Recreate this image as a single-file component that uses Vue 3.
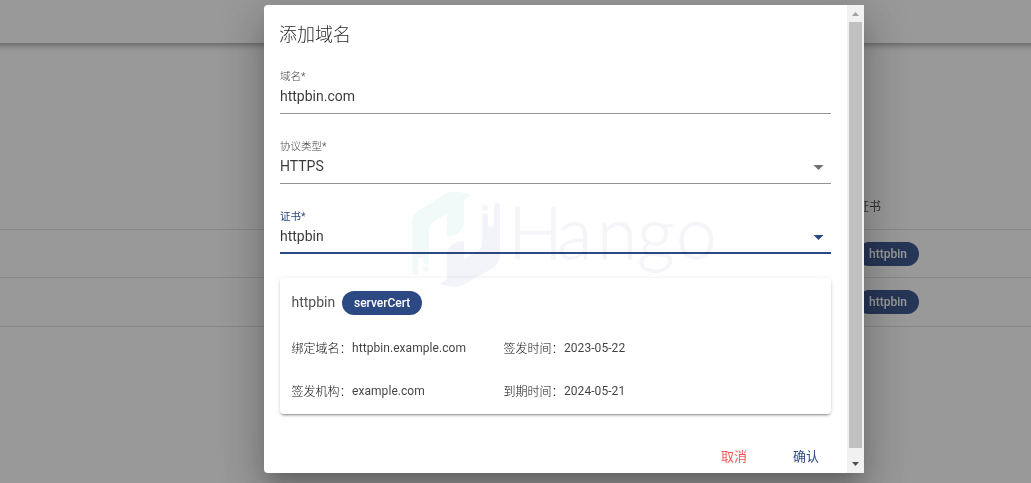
<script setup>
const backgroundRows = ['httpbin', 'httpbin']
const fields = [
  { label: '域名*', value: 'httpbin.com', select: false, active: false },
  { label: '协议类型*', value: 'HTTPS', select: true, active: false },
  { label: '证书*', value: 'httpbin', select: true, active: true },
]
const details = [
  { label: '绑定域名：', value: 'httpbin.example.com' },
  { label: '签发时间：', value: '2023-05-22' },
  { label: '签发机构：', value: 'example.com' },
  { label: '到期时间：', value: '2024-05-21' },
]
</script>

<template>
  <div class="app">
    <div class="page">
      <header class="toolbar"></header>
      <div class="table">
        <div class="row head"><span>证书</span></div>
        <div v-for="(name, i) in backgroundRows" :key="i" class="row">
          <span class="chip">{{ name }}</span>
        </div>
      </div>
    </div>
    <div class="scrim"></div>

    <div class="dialog">
      <div class="content">
        <h1 class="title">添加域名</h1>
        <div v-for="f in fields" :key="f.label" class="field" :class="{ active: f.active }">
          <div class="label">{{ f.label }}</div>
          <div class="value">
            <span>{{ f.value }}</span>
            <svg v-if="f.select" class="caret" width="24" height="24" viewBox="0 0 24 24">
              <path d="M6.500 10l5 5 5-5z" />
            </svg>
          </div>
        </div>
        <section class="card">
          <div class="card-head">
            <span class="card-name">httpbin</span>
            <span class="chip">serverCert</span>
          </div>
          <div class="details">
            <div v-for="d in details" :key="d.label" class="detail">
              <span class="key">{{ d.label }}</span><span>{{ d.value }}</span>
            </div>
          </div>
        </section>
        <footer class="actions">
          <button class="cancel">取消</button>
          <button class="confirm">确认</button>
        </footer>
      </div>
      <div class="scrollbar">
        <svg width="17" height="17" viewBox="0 0 17 17"><path d="M5 11h7L8.500 7z" fill="#a3a3a3" /></svg>
        <div class="thumb"></div>
        <svg width="17" height="17" viewBox="0 0 17 17"><path d="M5 6h7L8.500 10z" fill="#505050" /></svg>
      </div>

      <svg class="watermark" width="320" height="120" viewBox="400 180 320 120">
        <g fill="#f2faf9">
          <path d="M412 222Q412 214 419 210L447 193Q455 189 471 195L464 200V220Q464 236 447 236V214L433 222Q429 225 429 231V261Q429 265 426 265Q423 265 423 261V258H418V271Q418 275 415 275Q412 275 412 271Z" />
          <circle cx="426" cy="269" r="3" />
        </g>
        <g fill="#f3f4f9">
          <path d="M482 217Q482 213 485 213Q488 213 488 217V224Q488 227 491 227Q494 227 494 224V206Q494 203 497 203Q500 203 500 206V255Q500 263 493 268L463 285Q455 289 440 284L447 279V256Q447 242 464 241V259L478 251Q482 249 482 243Z" />
          <circle cx="485" cy="208" r="3" />
        </g>
        <text x="508 557 597 637 676" y="259">Hango</text>
      </svg>
    </div>
  </div>
</template>

<style>
html, body { margin: 0; overflow: hidden; }
</style>

<style scoped>
.app {
  position: relative;
  height: 483px;
  overflow: hidden;
  color: rgba(0, 0, 0, 0.87);
  font-family: Roboto, "Noto Sans CJK SC", sans-serif;
}
.page { height: 483px; background: #fff; }
.toolbar {
  height: 43px;
  margin: 0 -20px;
  box-shadow: 0 2px 4px -1px rgba(0, 0, 0, 0.2), 0 4px 5px rgba(0, 0, 0, 0.14), 0 1px 10px rgba(0, 0, 0, 0.12);
}
.table { padding-top: 138px; }
.row {
  display: flex;
  align-items: center;
  box-sizing: border-box;
  height: 49px;
  padding-left: 857px;
  border-bottom: 1px solid rgba(0, 0, 0, 0.12);
}
.row:nth-child(2) { height: 48px; }
.row.head { font-size: 12px; color: rgba(0, 0, 0, 0.75); }
.chip {
  display: inline-flex;
  align-items: center;
  height: 24px;
  padding: 0 12px;
  border-radius: 12px;
  background: #2c4983;
  color: #fff;
  font-size: 12px;
  font-weight: 500;
}
.scrim { position: absolute; inset: 0; background: rgba(33, 33, 33, 0.46); }
.dialog {
  position: absolute;
  left: 264px;
  top: 5px;
  display: flex;
  width: 600px;
  height: 468px;
  border-radius: 4px 0 0 4px;
  background: #fff;
  box-shadow: 0 11px 15px -7px rgba(0, 0, 0, 0.2), 0 24px 38px 3px rgba(0, 0, 0, 0.14), 0 9px 46px 8px rgba(0, 0, 0, 0.12);
}
.content { flex: 1; padding: 0 16px; }
.title { margin: 0 0 0 -1px; padding-top: 14px; height: 46px; line-height: 32px; font-size: 18px; font-weight: 300; }
.field { box-sizing: border-box; height: 49px; margin-bottom: 21px; border-bottom: 1px solid #949494; }
.label { padding-top: 4px; height: 15px; line-height: 16px; font-size: 10.5px; font-weight: 300; color: rgba(0, 0, 0, 0.75); }
.value { display: flex; justify-content: space-between; align-items: center; height: 24px; font-size: 14px; letter-spacing: 0; color: rgba(0, 0, 0, 0.78); }
.caret { fill: #707070; margin-top: 2px; }
.active { border-bottom: 2px solid #2c4983; }
.active .label { color: #2c4983; font-weight: 400; }
.active .caret { fill: #2c4983; }
.card {
  box-sizing: border-box;
  height: 136px;
  margin-top: 24px;
  padding: 12px 12px 12px 11.5px;
  border-radius: 4px;
  box-shadow: 0 3px 1px -2px rgba(0, 0, 0, 0.2), 0 2px 2px rgba(0, 0, 0, 0.14), 0 1px 5px rgba(0, 0, 0, 0.12);
}
.card-head { display: flex; align-items: center; height: 25px; }
.card-name { width: 50.5px; padding-bottom: 2px; font-size: 14px; color: rgba(0, 0, 0, 0.7); }
.details { display: grid; grid-template-columns: 212px 1fr; grid-auto-rows: 43px; padding-top: 11px; }
.detail { display: flex; align-items: center; font-size: 12px; letter-spacing: 0.06px; color: rgba(0, 0, 0, 0.75); }
.key { width: 60.5px; font-weight: 300; letter-spacing: 0; white-space: nowrap; color: rgba(0, 0, 0, 0.95); }
.actions { display: flex; justify-content: flex-end; gap: 46px; padding: 34px 12px 0 0; }
button { padding: 0; border: 0; background: none; font: 400 13px/18px Roboto, "Noto Sans CJK SC", sans-serif; }
.cancel { color: #ff5252; }
.confirm { color: #2c4983; }
.scrollbar { display: flex; flex-direction: column; width: 17px; background: #f1f1f1; }
.scrollbar svg { flex: none; }
.thumb { height: 426px; margin: 0 2px; background: #c1c1c1; }
.scrollbar svg:last-child { margin-top: auto; }
.watermark { position: absolute; left: 136px; top: 175px; mix-blend-mode: multiply; pointer-events: none; }
.watermark text { font-family: Lato, sans-serif; font-size: 73px; font-weight: 300; fill: #f4f5f9; stroke: #f4f5f9; stroke-width: 0.8px; }
</style>
